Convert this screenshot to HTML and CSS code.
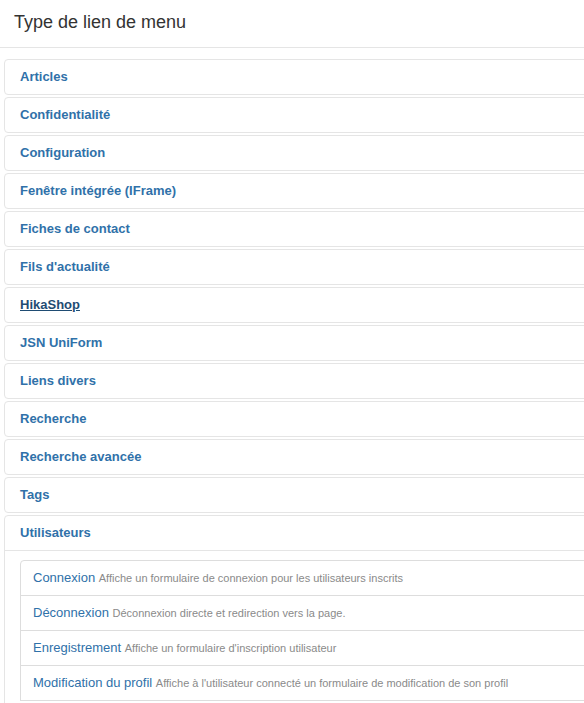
FILE: index.html
```html
<!DOCTYPE html>
<html lang="fr">
<head>
<meta charset="utf-8">
<title>Type de lien de menu</title>
<link rel="stylesheet" href="styles.css">
</head>
<body>
<div class="modal">
  <div class="modal-header">
    <h3 class="modal-title">Type de lien de menu</h3>
  </div>
  <div class="modal-body">
    <div class="accordion">
      <div class="group"><a class="toggle" href="#">Articles</a></div>
      <div class="group"><a class="toggle" href="#">Confidentialité</a></div>
      <div class="group"><a class="toggle" href="#">Configuration</a></div>
      <div class="group"><a class="toggle" href="#">Fenêtre intégrée (IFrame)</a></div>
      <div class="group"><a class="toggle" href="#">Fiches de contact</a></div>
      <div class="group"><a class="toggle" href="#">Fils d'actualité</a></div>
      <div class="group"><a class="toggle hover" href="#">HikaShop</a></div>
      <div class="group"><a class="toggle" href="#">JSN UniForm</a></div>
      <div class="group"><a class="toggle" href="#">Liens divers</a></div>
      <div class="group"><a class="toggle" href="#">Recherche</a></div>
      <div class="group"><a class="toggle" href="#">Recherche avancée</a></div>
      <div class="group"><a class="toggle" href="#">Tags</a></div>
      <div class="group">
        <a class="toggle" href="#">Utilisateurs</a>
        <div class="inner">
          <ul class="stacked">
            <li><a href="#">Connexion <small>Affiche un formulaire de connexion pour les utilisateurs inscrits</small></a></li>
            <li><a href="#">Déconnexion <small>Déconnexion directe et redirection vers la page.</small></a></li>
            <li><a href="#">Enregistrement <small>Affiche un formulaire d'inscription utilisateur</small></a></li>
            <li><a href="#">Modification du profil <small>Affiche à l'utilisateur connecté un formulaire de modification de son profil</small></a></li>
          </ul>
        </div>
      </div>
    </div>
  </div>
</div>
</body>
</html>
```
FILE: styles.css
```css
html, body {
  margin: 0;
  padding: 0;
  background: #fff;
  overflow: hidden;
  height: 703px;
}
body {
  font-family: "Liberation Sans", Arial, Helvetica, sans-serif;
  font-size: 13px;
  line-height: 18px;
  color: #333;
}
.modal {
  width: 584px;
  overflow: hidden;
}
.modal-header {
  height: 47px;
  border-bottom: 1px solid #e5e5e5;
  padding: 0 14px;
  display: flex;
  align-items: center;
}
.modal-title {
  margin: 0;
  font-size: 18px;
  font-weight: normal;
  line-height: 24px;
  color: #333;
  padding-bottom: 4px;
}
.modal-body {
  padding: 11px 0 0 4px;
}
.accordion {
  width: 620px;
}
.group {
  border: 1px solid #e5e5e5;
  border-radius: 4px;
  margin-bottom: 2px;
}
.toggle {
  display: block;
  padding: 8px 15px;
  font-weight: bold;
  color: #3071a9;
  text-decoration: none;
}
.toggle.hover {
  color: #1f4c73;
  text-decoration: underline;
}
.inner {
  border-top: 1px solid #e5e5e5;
  padding: 9px 15px;
}
.stacked {
  list-style: none;
  margin: 0;
  padding: 0;
}
.stacked li a {
  display: block;
  padding: 8px 12px;
  border: 1px solid #ddd;
  margin-top: -1px;
  color: #3071a9;
  text-decoration: none;
  font-size: 13px;
  line-height: 18px;
}
.stacked li:first-child a {
  margin-top: 0;
  border-radius: 4px 4px 0 0;
}
.stacked small {
  font-size: 11px;
  color: #8a8a8a;
}
```
